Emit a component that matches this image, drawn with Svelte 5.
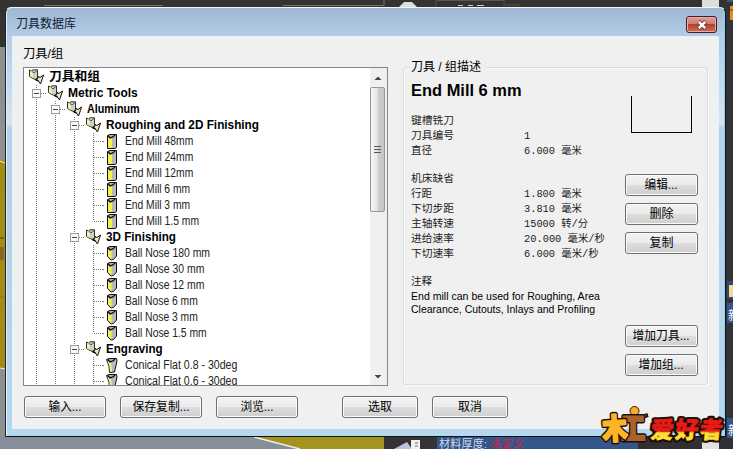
<script lang="ts">
    type Row = { level: number, text: string, width: number, kind: string, last?: boolean }

    const tree: Row[] = [
        { level: 0, text: '刀具和组', width: 51, kind: 'group' },
        { level: 1, text: 'Metric Tools', width: 70, kind: 'group' },
        { level: 2, text: 'Aluminum', width: 53, kind: 'group' },
        { level: 3, text: 'Roughing and 2D Finishing', width: 153, kind: 'group' },
        { level: 4, text: 'End Mill 48mm', width: 68, kind: 'end' },
        { level: 4, text: 'End Mill 24mm', width: 68, kind: 'end' },
        { level: 4, text: 'End Mill 12mm', width: 68, kind: 'end' },
        { level: 4, text: 'End Mill 6 mm', width: 65, kind: 'end' },
        { level: 4, text: 'End Mill 3 mm', width: 65, kind: 'end' },
        { level: 4, text: 'End Mill 1.5 mm', width: 74, kind: 'end', last: true },
        { level: 3, text: '3D Finishing', width: 70, kind: 'group' },
        { level: 4, text: 'Ball Nose 180 mm', width: 85, kind: 'ball' },
        { level: 4, text: 'Ball Nose 30 mm', width: 79, kind: 'ball' },
        { level: 4, text: 'Ball Nose 12 mm', width: 79, kind: 'ball' },
        { level: 4, text: 'Ball Nose 6 mm', width: 73, kind: 'ball' },
        { level: 4, text: 'Ball Nose 3 mm', width: 73, kind: 'ball' },
        { level: 4, text: 'Ball Nose 1.5 mm', width: 82, kind: 'ball', last: true },
        { level: 3, text: 'Engraving', width: 57, kind: 'group' },
        { level: 4, text: 'Conical Flat 0.8 - 30deg', width: 112, kind: 'cone' },
        { level: 4, text: 'Conical Flat 0.6 - 30deg', width: 112, kind: 'cone' }
    ]

    const details = [
        { rows: [['键槽铣刀', 43], ['刀具编号', 43, '1', 6], ['直径', 21, '6.000 毫米', 58]] },
        {
            rows: [
                ['机床缺省', 43],
                ['行距', 21, '1.800 毫米', 58],
                ['下切步距', 43, '3.810 毫米', 58],
                ['主轴转速', 43, '15000 转/分', 64],
                ['进给速率', 43, '20.000 毫米/秒', 81],
                ['下切速率', 43, '6.000 毫米/秒', 75]
            ]
        }
    ] as { rows: any[][] }[]

    // squeeze or stretch a label to its pixel width
    function fit(node: HTMLElement, width: number) {
        node.style.transform = `scaleX(${width / node.offsetWidth})`
    }
</script>

<div class="desktop">
    <svg class="backdrop" width="733" height="449">
        <rect width="733" height="449" fill="#353331" />
        <path d="M44 5.5H163M283 5.5H384V0" fill="none" stroke="#77736d" />
        <path d="M399 7L404 2H412L417 7Z" fill="#ddd" />
        <path d="M436 7V.5H504V5H520" fill="none" stroke="#5a5751" />
        <path d="M458 5.5H463M468 5.5H473M477 5.5H484" stroke="#ccc" />
        <rect y="47" width="5" height="402" fill="#8d8f91" />
        <rect y="160" width="5" height="208" fill="#a38b16" />
        <path d="M0 161L5 163M0 368L5 369" stroke="#eee" />
        <path d="M0 238H4" stroke="#443c18" />
        <rect y="247" width="4" height="13" fill="#8c6423" />
        <path d="M0 296L5 298" stroke="#b56524" />
        <rect y="437" width="384" height="12" fill="#858e99" />
        <path d="M254 437H384V449H300Z" fill="#a39420" />
        <path d="M254 437L300 449" stroke="#eee" stroke-width="1.5" />
        <rect x="384" y="436" width="53" height="13" fill="#343335" />
        <path d="M394 449L407 442L412 449Z" fill="#bfc0df" />
        <path d="M411 440H420V449H411Z" fill="#f0f0f0" />
        <path d="M415 443H418M415 446H418" stroke="#777" />
        <rect x="437" y="436" width="201" height="13" fill="#35568a" />
        <rect x="638" y="436" width="95" height="13" fill="#2f2f34" />
        <rect x="702" width="17" height="8" fill="#ddd" />
        <rect x="702" y="436" width="17" height="13" fill="#e2e2e2" />
        <rect x="726" y="7" width="7" height="430" fill="#333237" />
        <rect x="727" y="0" width="6" height="2" fill="#35568a" />
        <path d="M730 6H733V20H730Z" fill="#ef8a1d" />
        <path d="M730 10H733" stroke="#713e16" />
        <rect x="727" y="281" width="6" height="18" fill="#334a78" />
        <rect x="729" y="285" width="4" height="12" fill="#f4dc8e" />
        <rect x="727" y="303" width="6" height="20" fill="#35568a" />
        <rect x="727" y="418" width="6" height="20" fill="#35568a" />
        <text x="728" y="320" class="side">新</text>
        <text x="728" y="435" class="side">新</text>
        <text x="439" y="448" class="status" textLength="48">材料厚度:</text>
        <text x="491" y="448" class="status red">未定义</text>
    </svg>

    <div class="window">
        <header>
            <span class="title" use:fit={60}>刀具数据库</span>
            <button class="close" aria-label="close">
                <svg width="14" height="12" viewBox="0 0 14 12">
                    <path d="M3.5 2.5L10.5 9.5M10.5 2.5L3.5 9.5" stroke="#6b3540" stroke-width="4" />
                    <path d="M3.8 2.8L10.2 9.2M10.2 2.8L3.8 9.2" stroke="#fff" stroke-width="2.4" />
                </svg>
            </button>
        </header>

        <div class="client">
            <div class="caption"><span use:fit={40}>刀具/组</span></div>
            <div class="panes">
                <div class="tree">
                    <div class="rows">
                        {#each tree as row}
                            <div class="row" class:bold={row.kind === 'group'}>
                                {#each Array(row.level) as _, i}
                                    <svg class="guide" width="19" height="16">
                                        <path
                                            d={i === 3 && row.last ? 'M9.5 0V8' : 'M9.5 0V16'}
                                            stroke="#777"
                                            stroke-dasharray="1 1"
                                        />
                                        {#if i === row.level - 1}
                                            <path d="M10 8.5H20" stroke="#777" stroke-dasharray="1 1" />
                                            {#if row.kind === 'group'}
                                                <rect x="5.5" y="4.5" width="8" height="8" fill="#fbfbfb" stroke="#9a9a9a" />
                                                <path d="M7 8.5H12" stroke="#444" />
                                            {/if}
                                        {/if}
                                    </svg>
                                {/each}
                                {#if row.kind === 'group'}
                                    <svg class="icon" width="22" height="16">
                                        <path d="M2.5 1L4.5 2L6 .8H10.5V8.5L8.5 10.5L6 9.5L2.5 7.5Z" fill="#cfcfca" stroke="#333" />
                                        <path d="M3 2L6 3V9L3 7.2Z" fill="#f0f0a0" />
                                        <path d="M5 2.5L7 4L10 1.5" fill="none" stroke="#555" />
                                        <path d="M8.5 10.5L11 9.5V7.5L13 8.5L16.5 6L13.5 15L11.5 12Z" fill="#e8e8e0" stroke="#111" />
                                        <path d="M11 9L13 10L13.2 13L11.5 11.5Z" fill="#f0f060" />
                                        <path d="M8.5 10.5L11.5 12" stroke="#111" stroke-width="1.4" />
                                    </svg>
                                {:else}
                                    <svg class="icon" width="22" height="16">
                                        <path d="M0 8.5H2" stroke="#777" stroke-dasharray="1 1" />
                                        {#if row.kind === 'end'}
                                            <path d="M4.5 2.5L7 1.5H13.5V14.5L12 15.5H4.5Z" fill="#b9b9b9" stroke="#111" />
                                            <path d="M5 4H9V15H5Z" fill="#f1f153" />
                                        {:else if row.kind === 'ball'}
                                            <path d="M4.5 2.5L7 1.5H13.5V11L10.5 14.5L8 15L4.5 11.5Z" fill="#b9b9b9" stroke="#111" />
                                            <path d="M5 4H8.5V14.5L5 11Z" fill="#f1f153" />
                                        {:else}
                                            <path d="M3.5 2.5L6 1.5H13.5L14 4L11.5 15L6.5 15.5L6 9Z" fill="#b9b9b9" stroke="#111" />
                                            <path d="M4.5 4.5H8L9 14.5L7 15L6.5 9Z" fill="#f1f193" />
                                        {/if}
                                        <path d="M5 2.5L7 5L10 4L12 2" fill="none" stroke="#111" stroke-width="1.4" />
                                    </svg>
                                {/if}
                                <span use:fit={row.width}>{row.text}</span>
                            </div>
                        {/each}
                    </div>
                    <div class="scroll">
                        <svg width="16" height="19"><path d="M4.5 12L8 8.5L11.5 12Z" fill="#444" /></svg>
                        <div class="thumb"><i></i><i></i><i></i></div>
                        <svg width="16" height="19"><path d="M4.5 9H11.5L8 12.5Z" fill="#444" /></svg>
                    </div>
                </div>

                <div class="group">
                    <div class="legend"><span use:fit={70}>刀具 / 组描述</span></div>
                    <div class="info">
                        <h1><span use:fit={111}>End Mill 6 mm</span></h1>
                        {#each details as block}
                            <dl>
                                {#each block.rows as [name, nameWidth, value, valueWidth]}
                                    <div>
                                        <dt><span use:fit={nameWidth}>{name}</span></dt>
                                        {#if value}<dd><span use:fit={valueWidth}>{value}</span></dd>{/if}
                                    </div>
                                {/each}
                            </dl>
                        {/each}
                        <dl><div><dt><span use:fit={21}>注释</span></dt></div></dl>
                        <p><span use:fit={189}>End mill can be used for Roughing, Area</span></p>
                        <p><span use:fit={184}>Clearance, Cutouts, Inlays and Profiling</span></p>
                    </div>
                    <div class="side-bar">
                        <div class="shape"></div>
                        <button><span use:fit={33}>编辑...</span></button>
                        <button><span use:fit={24}>删除</span></button>
                        <button><span use:fit={24}>复制</span></button>
                        <button class="gap"><span use:fit={57}>增加刀具...</span></button>
                        <button><span use:fit={45}>增加组...</span></button>
                    </div>
                </div>
            </div>

            <footer>
                <button><span use:fit={33}>输入...</span></button>
                <button><span use:fit={57}>保存复制...</span></button>
                <button><span use:fit={33}>浏览...</span></button>
                <button class="narrow first"><span use:fit={24}>选取</span></button>
                <button class="narrow"><span use:fit={24}>取消</span></button>
            </footer>
        </div>
    </div>

    <svg class="logo" width="130" height="46" viewBox="600 403 130 46">
        <defs>
            <linearGradient id="fire" gradientUnits="userSpaceOnUse" x1="0" y1="-19" x2="0" y2="2">
                <stop offset="0.58" stop-color="#ea1a16" />
                <stop offset="0.66" stop-color="#ffdf32" />
            </linearGradient>
        </defs>
        <circle cx="634.5" cy="411" r="4.5" fill="#f5ad26" stroke="#3a1b08" />
        <path d="M636 419L648 415" stroke="#2b1409" stroke-width="4" />
        <path d="M638 418L646 415.5" stroke="#ad6430" stroke-width="1.5" />
        <g transform="translate(621 439) scale(.84 1)">
            <text class="outline big">工</text>
            <text class="face big work">工</text>
        </g>
        <g transform="translate(603 440) rotate(-4) scale(.86 1)">
            <text class="outline big">木</text>
            <text class="face big wood">木</text>
        </g>
        <g transform="translate(650 438) skewX(-6)">
            <text class="outline fan" textLength="72">爱好者</text>
            <text class="face fan" textLength="72">爱好者</text>
        </g>
    </svg>
</div>

<style>
    .desktop {
        position: relative;
        width: 733px;
        height: 449px;
        overflow: hidden;
        font: 12px "Liberation Sans", "Noto Sans CJK SC", sans-serif;
        color: #000;
    }
    .backdrop {
        display: block;
    }
    .side {
        font-size: 12px;
        fill: #fff;
    }
    .status {
        font-size: 11px;
        fill: #d3dced;
    }
    .red {
        fill: #d3213f;
    }
    span {
        display: inline-block;
        white-space: nowrap;
        transform-origin: 0 50%;
    }
    .window {
        position: absolute;
        left: 5px;
        top: 7px;
        width: 721px;
        height: 430px;
        box-sizing: border-box;
        border: 1px solid #111;
        border-top-color: #eef6fd;
        border-left-color: #1d2730;
        border-radius: 6px 6px 0 0;
        background: linear-gradient(#9db7d3, #b4cce6 28px, #c6dbef 80px, #d3e4f3 116px, #b8d0e8 120px, #b5d8ee);
        box-shadow: inset 1px 0 #e3f0fa, inset -1px 0 #8fd8ec;
    }
    header {
        height: 28px;
        display: flex;
        align-items: flex-start;
        justify-content: space-between;
        padding: 0 18px 0 10px;
        box-sizing: border-box;
    }
    .title {
        line-height: 16px;
        margin-top: 8px;
        color: #10202f;
    }
    .close {
        width: 31px;
        height: 17px;
        margin: 8px -10px 0 0;
        display: flex;
        align-items: center;
        justify-content: center;
        border: 1px solid #4b1a24;
        border-radius: 3px;
        background: linear-gradient(#dda195, #cf7c6c 45%, #b63f2b 50%, #cf6d52);
        box-shadow: inset 0 0 0 1px #e3b0a8;
    }
    .client {
        width: 707px;
        height: 393px;
        margin: 0 6px;
        box-sizing: border-box;
        border: 1px solid #e6f2fb;
        padding-left: 10px;
        background: #f0f0f0;
    }
    .caption {
        height: 30px;
        line-height: 34px;
    }
    .panes {
        display: flex;
        gap: 15px;
    }
    .tree {
        width: 365px;
        height: 319px;
        box-sizing: border-box;
        border: 1px solid #82868c;
        display: flex;
        background: #fff;
        overflow: hidden;
    }
    .rows {
        flex: 1;
        padding: 1px 0 0 3px;
    }
    .row {
        display: flex;
        height: 16px;
        line-height: 17px;
        color: #222;
    }
    .row.bold {
        font-weight: bold;
        color: #000;
    }
    .guide,
    .icon {
        flex: none;
        display: block;
    }
    .row.bold .icon {
        width: 22px;
        margin-right: -2px;
    }
    .row.bold .icon + span {
        margin-left: 2px;
    }
    .scroll {
        width: 17px;
        display: flex;
        flex-direction: column;
        background: #f0f0f0;
    }
    .scroll svg {
        display: block;
        flex: none;
    }
    .thumb {
        width: 15px;
        height: 125px;
        box-sizing: border-box;
        margin-bottom: auto;
        display: flex;
        flex-direction: column;
        align-items: center;
        justify-content: center;
        gap: 2px;
        border: 1px solid #979797;
        border-radius: 2px;
        background: linear-gradient(90deg, #f7f7f7, #e6e6e8 45%, #cacbcd 60%, #c4c5c8);
    }
    .thumb i {
        width: 7px;
        height: 1px;
        background: #555;
    }
    .group {
        width: 305px;
        height: 318px;
        box-sizing: border-box;
        border: 1px solid #dcdcdc;
        border-radius: 3px;
        box-shadow: inset 1px 1px #fafafa, 1px 1px #fafafa;
        display: grid;
        grid-template: 15px 1fr / 214px 1fr;
        padding-left: 7px;
    }
    .legend {
        grid-column: 1 / 3;
        justify-self: start;
        width: 75px;
        height: 16px;
        line-height: 16px;
        margin-top: -9px;
        background: #f0f0f0;
    }
    h1 {
        margin: -3px 0 12px;
        font-size: 16px;
        line-height: 22px;
    }
    dl {
        margin: 0 0 13px;
        font: 10.5px/15px "Liberation Mono", "Noto Sans CJK SC", monospace;
        color: #222;
    }
    dl div {
        display: flex;
        height: 15px;
    }
    dt {
        width: 113px;
    }
    dd {
        margin: 0;
    }
    p {
        margin: 0;
        font-size: 11px;
        line-height: 13px;
    }
    dl + p {
        margin-top: -13px;
    }
    .side-bar {
        display: flex;
        flex-direction: column;
        align-items: flex-start;
        gap: 7px;
    }
    .shape {
        width: 61px;
        height: 37px;
        box-sizing: border-box;
        margin: 13px 0 34px 6px;
        border: 1px solid #000;
        border-top: 0;
    }
    .side-bar button {
        width: 73px;
    }
    .side-bar .gap {
        margin-top: 64px;
    }
    button {
        height: 22px;
        box-sizing: border-box;
        padding: 0;
        border: 1px solid #707070;
        border-radius: 3px;
        font: inherit;
        line-height: 19px;
        color: #000;
        background: linear-gradient(#f3f3f3, #ebebeb 48%, #dddddd 52%, #cfcfcf);
        box-shadow: inset 0 0 0 1px #fafafa;
    }
    button span {
        transform-origin: 50% 50%;
    }
    footer {
        display: flex;
        gap: 14px;
        margin: 10px 0 0 1px;
    }
    footer button {
        width: 82px;
    }
    footer .narrow {
        width: 76px;
    }
    footer .first {
        margin-left: 30px;
    }
    .logo {
        position: absolute;
        left: 600px;
        top: 403px;
    }
    .logo text {
        font-family: "Noto Sans CJK SC", sans-serif;
        font-weight: 900;
        stroke-linejoin: round;
    }
    .big {
        font-size: 29px;
    }
    .fan {
        font-size: 23px;
    }
    .outline {
        fill: #1d0f06;
        stroke: #1d0f06;
        stroke-width: 5px;
    }
    .face {
        fill: url(#fire);
        stroke: url(#fire);
        stroke-width: 0.6px;
    }
    .face.wood {
        fill: #fdb528;
        stroke: #fdb528;
        stroke-width: 2px;
    }
    .face.work {
        fill: #a9622c;
        stroke: #a9622c;
        stroke-width: 2px;
    }
</style>
